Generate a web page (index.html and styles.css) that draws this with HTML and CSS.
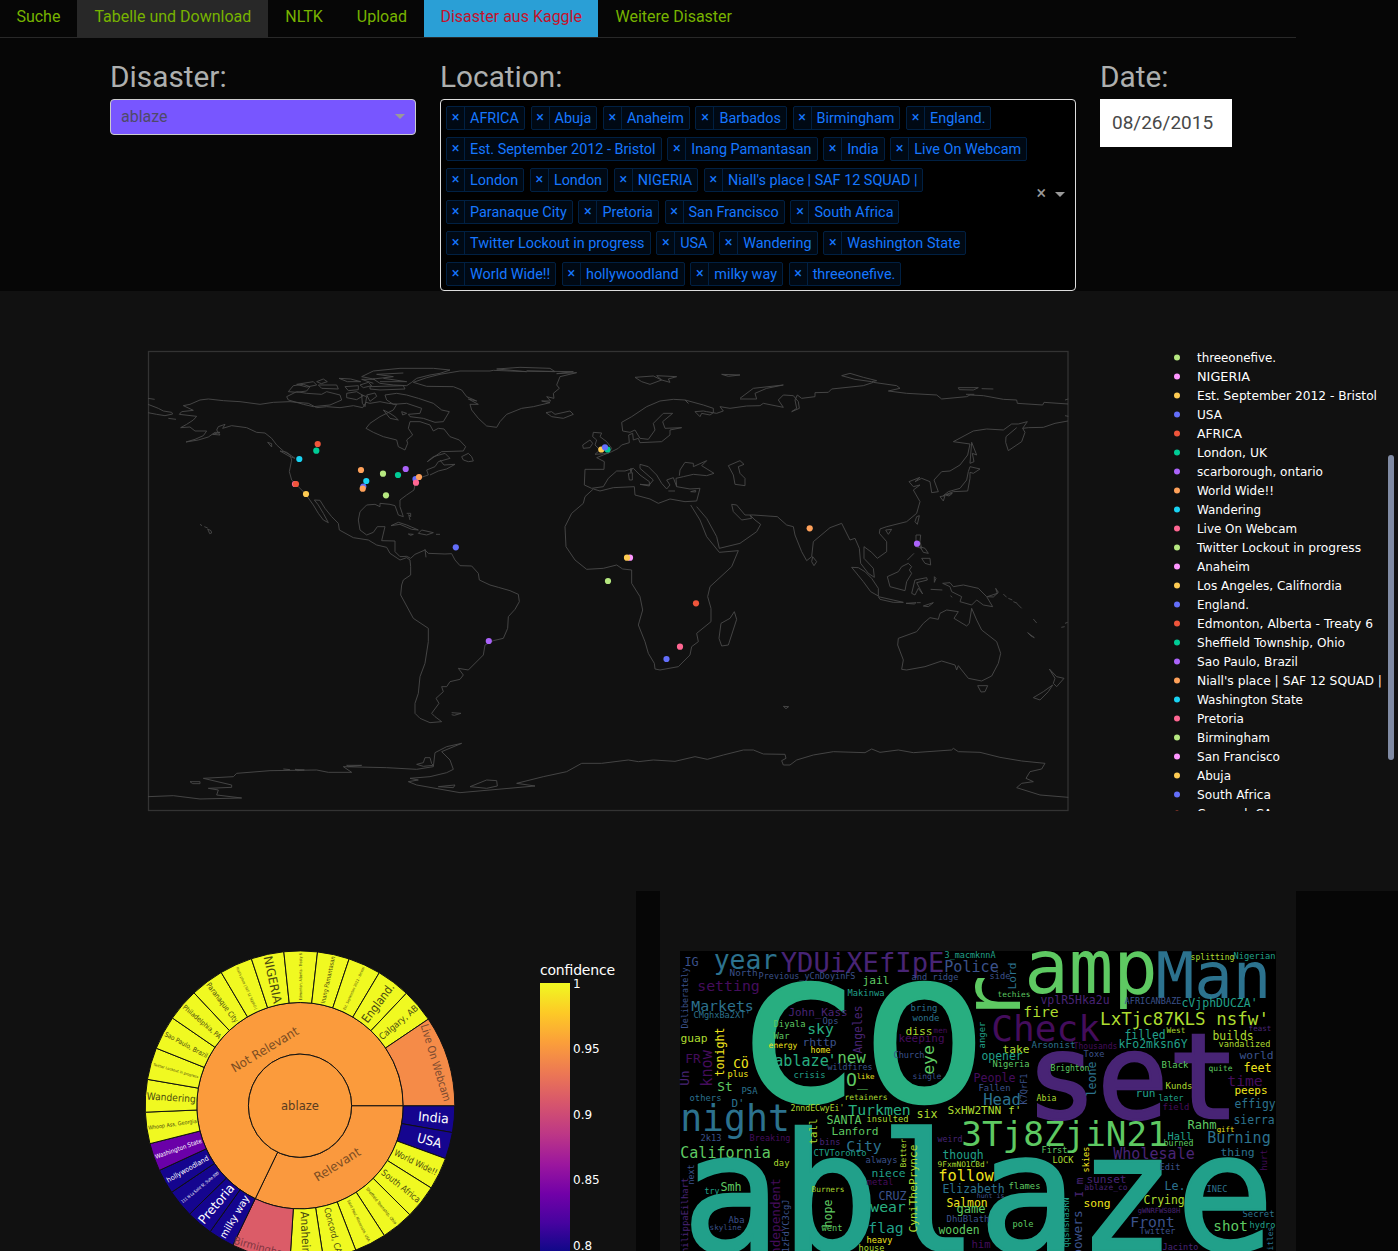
FILE: index.html
```html
<!DOCTYPE html>
<html lang="de">
<head>
<meta charset="utf-8">
<title>Disaster aus Kaggle</title>
<link rel="stylesheet" href="styles.css">
</head>
<body>
<div class="page">
<nav class="tabs">
  <a class="tab">Suche</a><a class="tab tab-hover">Tabelle und Download</a><a class="tab">NLTK</a><a class="tab">Upload</a><a class="tab tab-active">Disaster aus Kaggle</a><a class="tab">Weitere Disaster</a>
</nav>
<section class="filters">
  <div class="field">
    <h3>Disaster:</h3>
    <div class="select"><span>ablaze</span><i class="caret"></i></div>
  </div>
  <div class="field">
    <h3>Location:</h3>
    <div class="multi">
      <div class="rows" id="chips"></div>
      <span class="clear">×</span><i class="caret"></i>
    </div>
  </div>
  <div class="field">
    <h3>Date:</h3>
    <div class="date">08/26/2015</div>
  </div>
</section>
<section class="map">
<svg width="1398" height="600" viewBox="0 291 1398 600">
  <rect class="frame" x="148.5" y="351.5" width="919.5" height="459"/>
  <g class="coast" transform="translate(140 345) scale(.33333)">
    <path d="M24 178L55 190 70 198 95 202 98 207 75 212 50 208 24 203M85 220l23 3M24 160l20 3"/>
    <path d="M740 205L760 195 770 178 745 175 720 170 690 175 678 172 668 188 640 182 600 188 560 185 530 188 505 175 470 172 450 170 400 172 360 178 300 170 250 167 205 162 180 165 150 178 130 182 160 196 125 200 118 208 170 214 160 225 140 238 122 248 150 246 165 258 200 258 190 272 165 283 138 291 175 285 205 276 225 262 240 262 218 268 240 270 230 255 235 245 255 238 248 250 275 242 320 248 350 262 375 264 395 280 410 300 430 318 450 330 455 345 448 380 455 405 475 425 495 445 520 480 535 505 550 525 565 533 550 505 535 480 523 465 540 466 555 490 575 515 595 535 598 555 640 578 685 585 710 600 740 607 750 625 780 645 800 638 810 645 812 665 812 690 790 705 785 720 782 750 820 820 865 850 865 890 855 955 840 995 835 1045 825 1075 825 1105 840 1120 870 1133 905 1130 885 1115 875 1105 897 1075 888 1060 910 1040 905 1025 920 1025 930 1010 960 1003 970 990 955 970 985 975 1030 930 1035 900 1060 887 1090 880 1103 850 1105 815 1125 793 1138 770 1135 748 1110 737 1075 727 1050 720 1018 705 1015 685 995 663 960 662 945 645 935 626 915 627 865 625 855 615 825 628 812 640 800 634 780 635 765 620 765 588 725 587 735 545 712 545 700 562 680 570 660 555 655 525 660 500 680 480 705 478 720 485 720 475 750 478 765 482 775 510 790 515 780 485 780 465 800 450 822 435 825 420 835 400 865 390 860 375 885 365 895 350 930 340 915 325 880 335 862 350 905 320 970 318 977 305 958 285 930 275 912 252 895 250 880 258 870 240 840 230 810 230 805 250 818 270 800 285 803 295 795 315 775 305 770 285 730 275 700 262 678 250 690 235 720 215z"/>
    <path d="M735 150L770 145 800 150 835 160 880 175 905 195 928 200 910 230 885 232 850 220 810 215 805 208 840 205 845 190 800 175 760 178 740 165zM440 155L470 140 500 145 545 148 560 140 600 150 605 165 570 180 520 185 490 178 445 165zM445 140L460 122 490 118 510 125 500 138 470 142zM530 110l20-8 12 8-18 6zM597 100l35 2 30 8-40 0zM615 125l40-3 0 12-30 3zM535 120L590 120 595 132 545 130zM690 125L790 122 795 132 720 135 690 132zM470 118l50 -8 10 10-30 6zM620 145l30-5 20 12-20 12-30-6zM665 150l15 5-5 30-8-10zM680 150l25-6 5 10-20 15zM660 120l25-8 10 10-25 6zM730 195l20 10 15 10 10 10-25-5zM785 200l15 5-12 5z"/>
    <path d="M665 95L700 78 780 70 880 70 930 75 900 85 870 90 830 100 815 112 800 122 760 120 720 115 700 102 760 95 710 88 790 84M665 95l40 8-40 0 35 12M730 100l70 10-80 0"/>
    <path d="M820 112L860 98 900 88 960 78 1050 78 1060 76 1160 80 1070 72 1140 67 1230 70 1245 80 1160 78 1300 80 1250 86 1310 83 1260 95 1250 120 1258 130 1240 145 1242 160 1220 155 1232 168 1205 168 1230 173 1180 185 1145 190 1100 208 1080 230 1070 247 1040 243 1015 220 995 195 990 178 1015 178 985 162 1010 168 980 155 965 135 940 125 860 124z"/>
    <path d="M420 318l20 4 25 18-15-5zM383 292l12 4 0 10zM753 542L775 532 800 540 835 555 815 553 780 538zM835 565L845 555 880 563 860 570zM805 567l15 1-8 3zM888 568l12 0M800 505l12 0 0 10-6-6 4 16M180 538l6 4M193 545l10 4M203 552l10 5 2 7-6 2zM855 612l3 25M965 335L985 325 995 335 1000 348 985 350 970 345zM900 345L912 360 945 358 920 372 895 378 870 390M935 1103l28 2-20 6-8-2"/>
  </g>
  <g class="coast" transform="translate(440 345) scale(.33333)">
    <path d="M318 203L335 200 345 208 390 198 400 208 370 220 335 215zM585 97L640 93 665 105 630 118 605 110zM650 92L710 95 685 102 690 112 665 105zM845 88l55 2-35 4z"/>
    <path d="M960 182L920 183 870 190 840 185 850 198 830 205 800 200 790 198 765 200 780 215 785 205 810 210 820 203 820 190 790 180 735 165 745 175 735 165 700 163 660 168 620 185 575 215 545 232 548 258 570 262 585 255 600 280 625 283 645 255 640 235 670 205 698 205 668 230 675 250 725 248 690 255 690 270 665 290 600 293 595 280 580 285 578 265 566 270 568 293 545 300 535 310 515 320 490 330 470 338 493 350 492 373 435 373 433 420 455 430 490 425 505 400 530 378 555 378 580 370 600 390 628 410 628 423 600 418 628 420 640 405 600 370 600 358 625 365 650 390 665 415 680 432 690 420 680 405 700 398 710 425 750 432 780 430 770 468 735 470 690 462 655 475 630 462 585 450 583 425 520 428 480 438 460 432 435 455 430 475 395 505 375 545 378 605 405 645 440 673 490 670 530 660 548 672 575 675 575 715 600 755 608 795 595 840 615 890 625 925 643 955 645 972 660 975 715 965 750 930 755 905 775 890 770 865 813 830 813 790 803 755 810 725 875 665 895 617 838 622 800 575 780 525 752 480"/>
    <path d="M770 485L800 520 830 575 838 610 900 595 950 560 962 538 945 525 930 510 935 520 905 525 880 500 875 478 890 480 915 510 940 510 1012 515 1040 540 1060 545 1065 570 1085 620 1100 647 1115 635 1120 590 1170 548 1205 535 1230 585 1245 580 1258 610 1262 655 1285 685 1303 697 1300 670 1272 640 1272 605 1295 622 1312 640 1340 620 1340 590 1318 565 1320 552 1340 545 1400 530 1430 505 1440 470 1420 435 1440 420 1420 425 1407 410 1440 397 1425 410 1445 400 1470 410 1475 443 1495 440 1482 405 1505 380 1530 378 1560 360 1583 330 1590 297 1540 290 1600 258 1640 252 1690 255 1715 237 1735 237 1762 230 1748 250 1755 262 1745 290 1705 317 1697 292 1698 275 1730 248M1748 250L1765 248 1810 247 1845 235 1884 228M1875 212l10 2M1875 165l10-3"/>
    <path d="M960 182L970 175 1030 187 1015 165 1030 150 1060 152 1075 170 1078 190 1055 200 1070 190 1065 165 1072 150 1085 160 1125 155 1125 143 1165 142 1175 132 1270 122 1300 112 1370 122 1380 130 1345 138 1400 145 1490 150 1505 162 1580 155 1590 150 1630 152 1690 163 1730 165 1732 175 1808 180 1812 172 1884 177M900 160L940 130 1030 120 980 130 945 145 950 162 900 162M1205 92L1230 85 1270 97 1310 107 1295 110 1245 103zM1555 128l60 0-15 7-42-1zM1625 131l35 1M1578 148l25 0"/>
    <path d="M460 262l25 2-5 11 20 15 15 20-10 15-40 3 15-13-15-15 5-15-12-10zM428 300l22-15 8 10-8 13-20 2zM718 392L720 375 735 352 760 355 760 365 800 347 785 362 822 385 800 392 760 388 730 395 708 400 710 425M865 362L900 347 912 358 895 365 900 385 915 400 915 422 885 418 880 390zM565 385l12-2 0 22-9 0zM570 372l6 0-3 10zM685 438l20 0M752 440l15-4 0 5z"/>
    <path d="M1595 292L1610 330 1597 325 1602 350 1590 355zM1590 365L1620 372 1600 385 1590 382 1590 400 1583 438 1540 440 1510 452 1525 440 1560 430 1580 405 1585 380zM1500 455l15-3-5 16zM1517 450l20-5-10 8zM1430 515l8-3-6 26-7-8zM1337 555l18-2-10 15zM1428 570l14 0-2 20 5 20-17-5zM1445 640l25 0 2 20-17-5zM1440 605l15 5 10 15-15-3zM1422 625l-20 20M1118 635l12 15-8 12-7-12z"/>
  </g>
  <g class="coast" transform="translate(600 570) scale(.33333)">
    <path d="M755-8L790 35 812 65 835 78 835 55 815 25 795 5 775-7zM835 80L910 97 880 97 840 88zM862 20L895 5 905-10 925-20 935-10 928 0 935 10 920 35 915 62 870 50zM945 30L980 23 982 30 950 38 968 72 955 55 945 75 935 70zM1028 40L1050 38 1060 50 1090 45 1135 55 1160 80 1178 110 1150 105 1130 90 1115 105 1080 95 1085 80 1055 65 1050 50zM918 100l30-2-5 4zM950 98l12 0M970 108l30-10-15 12zM992 58l35 2M1003 20l5 5-5 12zM1162 80l30-10-5-15 8 12-15 14zM1210 72l10 10M1225 85l12 5M1240 95l12 5M1250 100l15 15M1300 147l10 12M1283 188l20 15-10-5zM1384 172l10-2M1395 160l8-3M1052 77l4 5"/>
    <path d="M905 298L910 270 893 225 895 205 950 185 970 160 990 143 1015 148 1020 130 1040 120 1075 125 1062 145 1100 168 1108 160 1115 115 1130 150 1145 180 1190 215 1202 250 1195 280 1175 318 1145 333 1105 325 1085 300 1075 287 1070 300 1065 285 1025 273 975 290 920 300zM1133 347l30 0-8 18-12 1zM1348 297L1370 320 1392 325 1370 350 1360 340 1365 325zM1358 345L1345 365 1320 390 1300 383 1330 365zM403 125L410 148 385 225 365 228 357 205 363 160 390 145zM550 409l16 1-8 6z"/>
    <path d="M5 580L85 570 115 575 160 570 225 574 285 560 322 568 370 555 430 540 460 540 490 552 555 553 558 565 545 572 550 585 570 585 590 570 640 555 700 545 795 548 815 537 840 547 895 540 940 548 1055 540 1060 535 1075 545 1140 547 1200 562 1265 573 1335 580 1325 597 1290 605 1278 625 1300 635 1265 640 1250 653 1320 675 1405 682"/>
  </g>
  <g class="coast" transform="translate(140 570) scale(.33333)">
    <path d="M24 680L100 677 180 687 305 684 230 675 235 660 205 655 275 652 275 645 190 625 280 620 290 610 390 602 530 600 565 607 635 607 610 590 740 593 830 598 880 590 885 548 920 530 965 520 905 545 930 570 940 598 920 608 870 620 810 625 835 630 805 635 830 645 960 668 1185 648 1130 640 1210 620 1280 605 1325 580 1385 580M150 635l30 0 0 6-22 0zM430 597l20 2M465 598l28 2-20 2zM620 586l45 0-40 4zM830 583l20-5 5-15 15 0 5 18 5 5-30 3zM895 650l50-5-5 8zM990 650L1040 630 1070 632 1072 648 1040 655z"/>
  </g>
  <g id="dots"></g>
  <clipPath id="lc"><rect x="1160" y="340" width="230" height="471"/></clipPath>
  <g id="legend" clip-path="url(#lc)"></g>
  <rect x="1388" y="455" width="6" height="305" rx="3" fill="#808ba4"/>
</svg>
</section>
<section class="charts">
  <div class="card">
    <svg width="636" height="360" viewBox="0 891 636 360">
      <defs><linearGradient id="plasma" x1="0" y1="0" x2="0" y2="1"><stop offset="0" stop-color="#f0f921"/><stop offset=".11" stop-color="#fdca26"/><stop offset=".22" stop-color="#fb9f3a"/><stop offset=".33" stop-color="#ed7953"/><stop offset=".44" stop-color="#d8576b"/><stop offset=".56" stop-color="#bd3786"/><stop offset=".67" stop-color="#9c179e"/><stop offset=".78" stop-color="#7201a8"/><stop offset=".89" stop-color="#46039f"/><stop offset="1" stop-color="#0d0887"/></linearGradient></defs>
      <g id="sun" transform="translate(300 1105.7)"></g>
      <rect x="540" y="983" width="30" height="270" fill="url(#plasma)"/>
      <g class="scale"><text class="scale-title" x="540" y="975" textLength="75">confidence</text><text x="573" y="988">1</text><text x="573" y="1053">0.95</text><text x="573" y="1119">0.9</text><text x="573" y="1184">0.85</text><text x="573" y="1250">0.8</text></g>
    </svg>
  </div>
  <div class="card">
    <svg width="636" height="360" viewBox="660 891 636 360">
      <rect x="680" y="951" width="596" height="300" fill="#000"/>
      <g id="cloud"></g>
    </svg>
  </div>
</section>
</div>
<script src="charts.js"></script>
</body>
</html>
```
FILE: styles.css
```css
* { box-sizing: border-box; }
body { margin: 0; background: #060606; color: #adafae; font-family: Roboto, "Liberation Sans", sans-serif; font-size: 16px; }
.page { width: 1398px; height: 1251px; overflow: hidden; }
svg { display: block; }
.tabs { display: flex; width: 1296px; height: 38px; border-bottom: 1px solid #282828; }
.tab { padding: 0 17px; line-height: 33px; color: #77b300; }
.tab:first-child { padding-left: 16.4px; }
.tab-hover { background: #282828; }
.tab-active { padding: 0 16.5px; background: #2a9fd6; color: #c4122c; }
.filters { display: grid; grid-template-columns: 306px 636px 132px; column-gap: 24px; padding: 21px 0 0 110px; height: 253px; }
h3 { margin: 0; height: 40px; font-weight: 400; font-size: 29.8px; line-height: 35px; }
.select { display: flex; justify-content: space-between; align-items: center; height: 36px; padding: 0 10px 2px; border: 1px solid #ccc; border-radius: 4px; background: #7856ff; color: #4f4a68; }
.caret { border: 5px solid transparent; border-top-color: #999; border-bottom: 0; }
.multi { display: flex; align-items: center; height: 192px; padding: 0 10px 2px 5px; border: 1px solid #ddd; border-radius: 4px; background: #000; }
.rows { flex: 1; display: grid; row-gap: 7.2px; padding-top: 4px; }
.row { display: flex; gap: 5.7px; height: 24px; }
.chip { display: flex; height: 24px; border: 1px solid #002043; border-radius: 2px; background: #000914; color: #1677ff; font-size: 14.4px; line-height: 23px; white-space: nowrap; }
.chip b { width: 18px; border-right: 1px solid #002043; font-weight: 400; line-height: 22px; text-align: center; }
.chip span { padding: 0 5px; }
.clear { margin-right: 9px; font-size: 18px; line-height: 18px; padding-bottom: 2px; color: #999; }
.date { height: 48px; padding-left: 12px; background: #fff; color: #484848; font-size: 19px; line-height: 47px; }
.map { height: 600px; background: #111; }
.frame { fill: none; stroke: #333; stroke-width: 1.3; }
.coast { fill: none; stroke: #484848; stroke-width: 2.8; stroke-linejoin: round; }
#legend text { fill: #fff; font: 12.5px "DejaVu Sans", sans-serif; }
.charts { display: grid; grid-template-columns: 636px 636px; column-gap: 24px; height: 360px; }
.card { background: #111; }
.scale text { fill: #fff; font: 12px "DejaVu Sans", sans-serif; }
.scale .scale-title { font-size: 14px; }
#sun path, #sun circle { stroke: #111; stroke-width: 1; }
#sun text { font-family: "DejaVu Sans", sans-serif; text-anchor: middle; }
#cloud text { font-family: "DejaVu Sans Mono", monospace; }
#cloud .heavy { stroke-width: 2.5; }
```
FILE: charts.js
```js
const $ = id => document.getElementById(id);

const rows = [
  ['AFRICA', 'Abuja', 'Anaheim', 'Barbados', 'Birmingham', 'England.'],
  ['Est. September 2012 - Bristol', 'Inang Pamantasan', 'India', 'Live On Webcam'],
  ['London', 'London', 'NIGERIA', "Niall's place | SAF 12 SQUAD |"],
  ['Paranaque City', 'Pretoria', 'San Francisco', 'South Africa'],
  ['Twitter Lockout in progress', 'USA', 'Wandering', 'Washington State'],
  ['World Wide!!', 'hollywoodland', 'milky way', 'threeonefive.']
];
$('chips').innerHTML = rows.map(r => '<div class="row">' + r.map(t => `<div class="chip"><b>×</b><span>${t}</span></div>`).join('') + '</div>').join('');

const C = ['#B6E880', '#FF97FF', '#FECB52', '#636EFA', '#EF553B', '#00CC96', '#AB63FA', '#FFA15A', '#19D3F3', '#FF6692'];
const dots = [[317.7,444,4],[316.3,450.7,5],[299.3,459,8],[361,470,7],[363.3,486.5,3],[366.3,481,8],[362.7,488.7,7],[383,473.7,0],[398,475,5],[405.7,469,6],[415.5,479,3],[419,477,7],[416,482.7,9],[386,495.3,0],[295,484,9],[296,484,4],[306,494,2],[455.8,547.3,3],[607.5,449.5,5],[601.3,449.5,2],[605,447.3,3],[630,557.7,1],[627,557.7,2],[608,581,0],[809.7,528.3,7],[917,543.7,6],[488.8,641,6],[696,603.3,4],[680,646.7,9],[666.5,659,3]];
$('dots').innerHTML = dots.map(([x, y, c]) => `<circle cx="${x}" cy="${y}" r="3.1" fill="${C[c]}"/>`).join('');

const legend = [['threeonefive.',79],['NIGERIA',53],['Est. September 2012 - Bristol',180],['USA',25],['AFRICA',45],['London, UK',70],['scarborough, ontario',126],['World Wide!!',77],['Wandering',64],['Live On Webcam',100],['Twitter Lockout in progress',164],['Anaheim',53],['Los Angeles, Califnordia',145],['England.',52],['Edmonton, Alberta - Treaty 6',176],['Sheffield Township, Ohio',148],['Sao Paulo, Brazil',101],["Niall's place | SAF 12 SQUAD |",185],['Washington State',106],['Pretoria',47],['Birmingham',73],['San Francisco',83],['Abuja',34],['South Africa',74],['Concord, CA',75]];
$('legend').innerHTML = legend.map(([t, w], i) => `<circle cx="1177" cy="${357.5 + 19 * i}" r="3" fill="${C[i % 10]}"/><text x="1197" y="${361.8 + 19 * i}" textLength="${w}" lengthAdjust="spacingAndGlyphs">${t}</text>`).join('');

const pt = (r, a) => [r * Math.cos(a * Math.PI / 180), r * Math.sin(a * Math.PI / 180)].map(v => v.toFixed(2)).join(' ');
const sector = (r0, r1, a, b, f) => `<path fill="${f}" d="M${pt(r0, a)}L${pt(r1, a)}A${r1} ${r1} 0 ${b - a > 180 ? 1 : 0} 1 ${pt(r1, b)}L${pt(r0, b)}A${r0} ${r0} 0 ${b - a > 180 ? 1 : 0} 0 ${pt(r0, a)}z"/>`;
const Y = '#f0f921', N = '#15058f', O = '#fb9b3c';
/* start angle, end angle, fill, label, label length, font size */
const leaves = [
  [0,10,N,'India',31,13],[10,20,N,'USA',25,13],[20,32.1,Y,'World Wide!!',47,8.6],[32.1,44.8,Y,'South Africa',47,9],[44.8,57,Y,'Sheffield Township, Ohio',46,4.3],[57,68.9,Y,'Saint Paul, Minnesota, USA',46,4],[68.9,81.3,Y,'Concord, CA',47,9],[81.3,93.7,Y,'Anaheim',46,11.5],[93.7,115.7,'#db5c68'],
  [115.7,125.5,N,'milky way',48,10],[125.5,135.5,N,'Pretoria',48,12.5],[135.5,146,N,'111 N La Salle St, Suite 800',47,4.2],[146,155.3,N,'hollywoodland',47,7.2],[155.3,165.8,'#6a00a8','Washington State',49,6.2],[165.8,177.6,Y,'Whoop Ass, Georgia',49,5.4],[177.6,189.8,Y,'Wandering',49,10],[189.8,201.8,Y,'Twitter Lockout in progress',47,3.7],[201.8,214.5,Y,'Sao Paulo, Brazil',48,6.6],[214.5,226.8,Y,'Philadelphia, PA',48,6.9],[226.8,239.4,Y,'Paranaque City',48,7.5],[239.4,251.7,Y,"Niall's place | SAF 12 SQUAD |",46,3.6],[251.7,264,Y,'NIGERIA',48,12],[264,276.5,Y,'Edmonton, Alberta - Treaty 6',47,4],[276.5,288.5,Y,'Inang Pamantasan',48,6],[288.5,300.8,Y,'Est. September 2012 - Bristol',47,3.6],[300.8,313.4,Y,'England.',46,12],[313.4,326,Y,'Calgary, AB',48,9],[326,360,'#f58b48']
];
let s = sector(51.6, 103.2, 0, 115.7, '#fa993e') + sector(51.6, 103.2, 115.7, 360, O);
leaves.forEach(([a, b, f]) => s += sector(103.2, 154.8, a, b, f));
s += `<circle r="51.6" fill="${O}"/>`;
leaves.forEach(([a, b, f, t, w, z]) => {
  if (!t) return;
  const m = (a + b) / 2, flip = m > 90 && m < 270.2;
  s += `<text transform="rotate(${m}) translate(${t === 'India' || t === 'USA' ? 134 : 129} 0)${flip ? ' rotate(180)' : ''}" y="${z * .36}" font-size="${z}" fill="${f === Y ? '#4a4a10' : '#fff'}" textLength="${w}" lengthAdjust="spacingAndGlyphs">${t}</text>`;
});
const label = (x, y, r, t, w, z, f) => `<text transform="translate(${x} ${y}) rotate(${r})" y="4" font-size="${z}" textLength="${w}" lengthAdjust="spacingAndGlyphs" fill="${f}">${t}</text>`;
s += label(0, 0, 0, 'ablaze', 38, 12, '#5a3c20') + label(-35, -56, -31, 'Not Relevant', 76, 12.5, '#7a4c22') + label(37.5, 59, -32, 'Relevant', 52, 12.5, '#7a4c22') + label(136, -43, 73, 'Live On Webcam', 80, 11, '#7a4a30') + label(-37, 142, 15, 'Birmingham', 60, 10.5, '#7d3540');
$('sun').innerHTML = s;

const V = { P:'#482475', D:'#440d5c', B:'#3b528b', T:'#2c728e', G:'#21a08a', E:'#28ae80', L:'#5ec962', Y:'#addc30', F:'#f0e51d' };
/* text, left, baseline, length, colour; a sixth field marks words that run upwards from (x, y) */
const words = [
['co',744,1101,233,'E'],['ablaze',690,1251,576,'G'],['set',1032,1118,201,'P'],['amp',1028,993,126,'L'],['Man',1159,998,109,'T'],['r',1020,1019,40,'L',1],
['Check',993,1041,105,'D'],['night',682,1131,106,'T'],['3Tj8ZjiN21',963,1146,203,'L'],['year',715,969,61,'T'],['YDUiXEfIpE',782,972,161,'P'],["LxTjc87KLS nsfw'",1101,1025,167,'Y'],
['IG',685,966,13,'B'],['setting',698,991,61,'D'],['North',730,976,27,'B'],['Previous_yCnDoyinFS',759,979,96,'B'],['Markets',692,1011,61,'T'],["CMghxBa2XT'",694,1018,56,'T'],['Deliberately',688,1028,60,'B',1],['jail',863,984,26,'L'],['Makinwa',848,996,36,'G'],['3_macmknnA',945,958,50,'G'],['Police',945,972,53,'B'],['and ridge',912,980,46,'B'],['side',990,979,20,'B'],['Lord',1016,989,26,'T',1],['techies',998,997,32,'L'],
['John_Kass',789,1016,58,'P'],['Diyala',774,1027,31,'L'],['Ops',823,1024,15,'B'],['sky',808,1034,25,'E'],['War',774,1039,15,'L'],['rhttp',803,1046,33,'B'],['energy',769,1048,28,'F'],['home',811,1053,19,'F'],['ablaze',775,1066,53,'E'],["'",828,1066,8,'E'],['new',838,1063,27,'L'],['wildfires',828,1070,44,'B'],['crisis',794,1078,31,'G'],['Angeles',862,1053,47,'P',1],['O_',847,1086,20,'L'],['like',857,1079,17,'F'],['retainers',845,1100,42,'Y'],
['guap',681,1042,26,'Y'],['tonight',724,1076,48,'F',1],['know',712,1086,35,'D',1],['FR',686,1063,14,'D'],['Un',689,1085,14,'P',1],['CÖ',734,1068,14,'F'],['plus',728,1077,20,'F'],['St',718,1091,14,'L'],['PSA',742,1094,15,'T'],['others',690,1101,31,'T'],["D'",732,1107,12,'T'],
['bring',911,1011,26,'T'],['wonde',913,1021,26,'T'],['diss',906,1035,26,'Y'],['men',934,1033,13,'D'],['keeping',899,1042,45,'D'],['Church',894,1058,30,'B'],['eye',934,1074,28,'L',1],['single',913,1079,28,'B'],['anger',985,1048,26,'G',1],["vplR5Hka2u",1041,1004,68,'P'],['AFRICANBAZE',1125,1004,56,'B'],["cVjphDUCZA'",1182,1007,75,'G'],['splitting',1191,960,43,'Y'],['Nigerian',1234,959,41,'G'],['fire',1024,1017,34,'Y'],
['take',1003,1053,26,'Y'],['Arsonist',1032,1048,43,'T'],['Thousands',1074,1049,43,'D'],['opener',982,1060,40,'G'],['Nigeria',993,1067,36,'L'],['People',974,1082,41,'D'],['Fallen',979,1091,31,'B'],['Head',984,1105,36,'T'],['K7QrF1',1027,1104,30,'B',1],['Abia',1037,1101,19,'Y'],['filled',1125,1039,40,'G'],['kFo2mksn6Y',1119,1048,68,'G'],['West',1167,1033,18,'Y'],['Toxe',1084,1057,20,'B'],['Brighton',1051,1071,38,'L'],['leone',1096,1096,34,'T',1],['Black',1162,1068,26,'L'],['Kunds',1166,1089,26,'Y'],['run',1136,1097,19,'G'],['later',1159,1101,24,'G'],['field',1163,1110,26,'D'],
['builds',1213,1040,40,'Y'],['feast',1249,1031,22,'P'],['vandalized',1219,1047,51,'Y'],['world',1240,1059,33,'B'],['quite',1209,1071,23,'L'],['feet',1244,1072,27,'F'],['time',1228,1086,34,'D'],['peeps',1235,1094,32,'F'],['effigy',1235,1108,40,'T'],['sierra',1234,1124,40,'T'],
["2nndECwyEi'",791,1111,53,'Y'],['Turkmen',849,1115,61,'E'],['insulted',867,1122,41,'Y'],['SANTA',827,1124,34,'L'],['Lanford',832,1135,46,'L'],['six',917,1118,20,'Y'],["SxHW2TNN f'",948,1114,73,'Y'],['tall',817,1144,25,'Y',1],['bins',820,1145,20,'P'],['City',847,1151,34,'T'],['CTVToronto',814,1156,52,'G'],['2k13',701,1141,20,'B'],['Breaking',750,1141,40,'D'],['California',681,1158,89,'L'],['day',774,1166,15,'Y'],['always',866,1163,31,'B'],['niece',872,1177,33,'G'],['metal',867,1185,26,'D'],['CRUZ',879,1200,27,'B'],['wear',871,1212,34,'E'],['flag',869,1233,34,'G'],['heavy',867,1243,25,'F'],['house',859,1251,25,'Y'],['Better',906,1167,28,'Y',1],['CyniThePrynce',917,1232,87,'Y',1],
['next',694,1184,19,'B',1],['try',705,1194,14,'G'],['Smh',721,1191,20,'L'],['PhilippaEilhart',688,1258,80,'P',1],['independent',780,1262,83,'D',1],['i1zFdYC3cgJ',789,1257,57,'B',1],['Aba',729,1223,15,'B'],['skyline',710,1230,31,'B'],['Burners',812,1192,32,'Y'],['hope',832,1227,27,'L',1],['went',822,1231,20,'L'],
['weird',938,1142,24,'P'],['though',943,1159,40,'G'],["9FxmNO1CBd'",938,1167,51,'Y'],['follow',939,1181,54,'F'],['Elizabeth',943,1193,61,'T'],['hunt is',977,1198,27,'B'],['Salmon',947,1207,40,'F'],['game',957,1213,28,'L'],['DhuBlath',947,1222,42,'B'],['wooden',939,1234,40,'L'],['him',972,1248,18,'D'],
['First',1042,1153,25,'L'],['LOCK',1053,1163,20,'Y'],['skies',1089,1172,25,'F',1],['Wholesale',1114,1159,80,'P'],['sunset',1087,1183,39,'P'],['ablaze_co',1085,1190,42,'P'],['Edit',1160,1170,20,'B'],['flames',1009,1189,31,'L'],['pole',1013,1227,20,'L'],['song',1084,1207,26,'F'],['qqsmsha3RN',1069,1247,49,'G',1],['I_m',1083,1197,19,'P',1],['powers',1082,1256,45,'B',1],['Crying',1144,1204,40,'Y'],['gWNRFWS08H',1138,1213,42,'P'],['Front',1131,1227,43,'B'],['Twitter',1140,1234,35,'B'],['Jacinto',1163,1250,35,'P'],['Le.',1165,1190,20,'T'],['INEC',1207,1192,20,'T'],['Rahm',1188,1129,28,'L'],['gift',1217,1132,17,'F'],['Hall',1168,1140,24,'G'],['burned',1164,1146,29,'L'],['Burning',1208,1143,62,'T'],['thing',1221,1156,33,'T'],['hurt',1267,1170,20,'D',1],['Secret',1243,1217,31,'T'],['shot',1214,1231,33,'L'],['hydro',1250,1228,25,'G'],['titles',1273,1255,28,'T',1]
];
$('cloud').innerHTML = words.map(([t, x, y, w, c, up]) => {
  const z = t === 'r' ? 80 : w / ((t.length - .17) * .602), l = t.length * z * .602;
  const at = up ? `transform="translate(${x} ${y + .05 * z}) rotate(-90)"` : `x="${x - .05 * z}" y="${y}"`;
  const heavy = z > 100 ? `class="heavy" stroke="${V[c]}"` : '';
  return `<text ${at} ${heavy} font-size="${z.toFixed(2)}" fill="${V[c]}" textLength="${l.toFixed(1)}">${t}</text>`;
}).join('');
```
